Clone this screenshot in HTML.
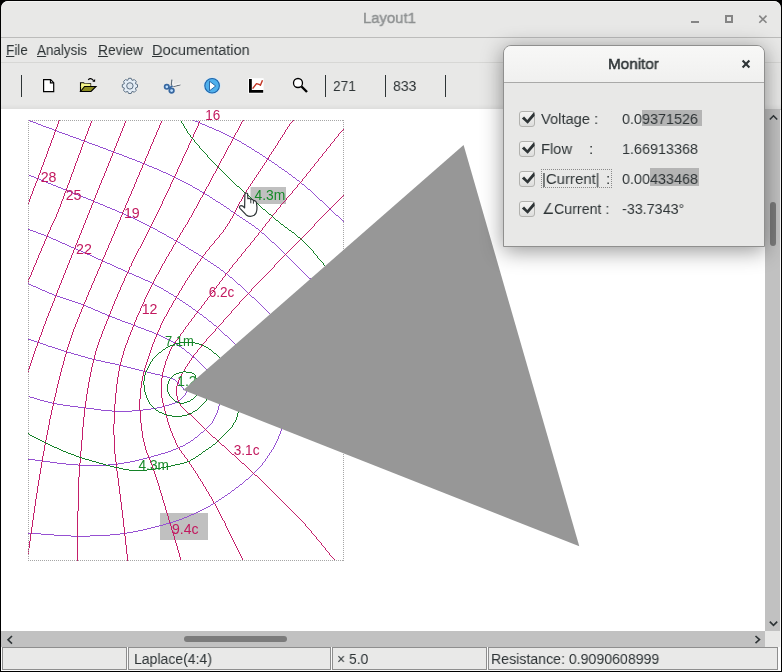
<!DOCTYPE html>
<html><head><meta charset="utf-8">
<style>
html,body{margin:0;padding:0;}
body{width:782px;height:672px;position:relative;overflow:hidden;background:#000;font-family:"Liberation Sans",sans-serif;color:#2e3436;font-size:15.4px;}
.abs{position:absolute;}
#win{position:absolute;left:1px;top:1px;width:780px;height:670px;background:#e8e8e7;border-radius:7px 7px 0 0;overflow:hidden;}
.t{position:absolute;white-space:nowrap;line-height:16px;transform-origin:0 50%;will-change:transform;}
svg{will-change:transform;}
.t u{text-decoration:underline;text-underline-offset:1px;text-decoration-thickness:1px;}
#title{left:362.3px;top:9.1px;color:#8e9192;-webkit-text-stroke:0.5px #8e9192;transform:scaleX(0.966);}
.sep{position:absolute;width:1px;background:#2e3436;top:74px;height:22px;}
#canvas{position:absolute;left:0;top:108px;width:764px;height:522px;background:#fff;}
.panel{position:absolute;top:646px;height:23px;background:#e9e9e8;border:1px solid #8e8e8e;box-sizing:border-box;}
.cb{position:absolute;left:518px;width:16px;height:16px;box-sizing:border-box;border:1px solid #b2b2af;border-radius:3px;background:linear-gradient(#f4f4f3,#dededd);}
</style></head><body>
<div id="win">
  <!-- title bar -->
  <div class="abs" style="left:0;top:0;width:780px;height:36px;background:#e8e8e7;box-shadow:inset 0 1px #f3f3f2;border-radius:7px 7px 0 0;"></div>
  <div class="abs" style="left:0;top:36px;width:780px;height:1px;background:#bcbcbb;"></div>
  <div class="t" id="title">Layout1</div>
  <!-- menu -->
  <div class="t" style="left:4.7px;top:40.5px;transform:scaleX(0.881);"><u>F</u>ile</div>
  <div class="t" style="left:36.4px;top:40.5px;transform:scaleX(0.873);"><u>A</u>nalysis</div>
  <div class="t" style="left:97.4px;top:40.5px;transform:scaleX(0.891);"><u>R</u>eview</div>
  <div class="t" style="left:151.3px;top:40.5px;transform:scaleX(0.943);"><u>D</u>ocumentation</div>
  <div class="abs" style="left:0;top:61px;width:780px;height:1px;background:#d7d7d5;"></div>
  <!-- toolbar -->
  <div class="sep" style="left:20px;"></div>
  <div class="sep" style="left:324px;"></div>
  <div class="sep" style="left:384px;"></div>
  <div class="sep" style="left:444px;"></div>
  <div class="t" style="left:331.5px;top:76.5px;transform:scaleX(0.895);">271</div>
  <div class="t" style="left:391.5px;top:76.5px;transform:scaleX(0.914);">833</div>
  <div class="abs" style="left:0;top:103px;width:780px;height:5px;background:linear-gradient(#e8e8e7,#dededd);"></div>
  <!-- canvas -->
  <div id="canvas"></div>
  <!-- scrollbars -->
  <div class="abs" style="left:764px;top:108px;width:16px;height:522px;background:#c1c1c1;"></div>
  <div class="abs" style="left:0;top:630px;width:764px;height:16px;background:#c1c1c1;"></div>
  <div class="abs" style="left:764px;top:630px;width:16px;height:16px;background:#e8e8e7;"></div>
  <div class="abs" style="left:183px;top:635px;width:103px;height:6px;border-radius:3px;background:#7b7b7b;"></div>
  <div class="abs" style="left:769px;top:201px;width:6px;height:44px;border-radius:3px;background:#7b7b7b;"></div>
  <div class="abs" style="left:779px;top:109px;width:1px;height:537px;background:#f6f6f6;"></div>
  <!-- status bar -->
  <div class="abs" style="left:0;top:646px;width:780px;height:24px;background:#fbfbfb;"></div>
  <div class="panel" style="left:1px;width:125px;"></div>
  <div class="panel" style="left:127px;width:203px;"></div>
  <div class="panel" style="left:331px;width:155px;"></div>
  <div class="panel" style="left:487px;width:290px;"></div>
  <div class="t" style="left:133.2px;top:649.5px;transform:scaleX(0.911);">Laplace(4:4)</div>
  <div class="t" style="left:335.6px;top:649.5px;transform:scaleX(0.905);">× 5.0</div>
  <div class="t" style="left:489.7px;top:649.5px;transform:scaleX(0.919);">Resistance: 0.9090608999</div>
</div>
<svg class="abs" style="left:0;top:0;" width="782" height="672" viewBox="0 0 782 672">
<defs><clipPath id="rc"><rect x="28" y="120" width="316" height="441"/></clipPath></defs>
<rect x="160" y="513" width="48" height="27" fill="#c0c0c0"/>
<rect x="250.5" y="187" width="35.5" height="17" fill="#c0c0c0"/>

<g shape-rendering="crispEdges">
<path d="M28 120h2v1h-2zM193 120h2v1h-2zM30 121h3v1h-3zM195 121h3v1h-3zM33 122h3v1h-3zM198 122h2v1h-2zM36 123h2v1h-2zM200 123h2v1h-2zM38 124h3v1h-3zM202 124h3v1h-3zM41 125h2v1h-2zM205 125h2v1h-2zM43 126h3v1h-3zM207 126h2v1h-2zM46 127h3v1h-3zM209 127h3v1h-3zM49 128h3v1h-3zM212 128h2v1h-2zM52 129h2v1h-2zM214 129h2v1h-2zM54 130h3v1h-3zM216 130h3v1h-3zM57 131h2v1h-2zM219 131h2v1h-2zM59 132h3v1h-3zM221 132h2v1h-2zM62 133h3v1h-3zM223 133h2v1h-2zM65 134h3v1h-3zM225 134h2v1h-2zM68 135h2v1h-2zM227 135h2v1h-2zM70 136h3v1h-3zM229 136h2v1h-2zM73 137h3v1h-3zM231 137h2v1h-2zM76 138h3v1h-3zM233 138h2v1h-2zM79 139h2v1h-2zM235 139h2v1h-2zM81 140h3v1h-3zM237 140h2v1h-2zM84 141h3v1h-3zM239 141h2v1h-2zM87 142h2v1h-2zM241 142h1v1h-1zM89 143h3v1h-3zM242 143h2v1h-2zM92 144h3v1h-3zM244 144h2v1h-2zM95 145h3v1h-3zM246 145h1v1h-1zM98 146h2v1h-2zM247 146h2v1h-2zM100 147h3v1h-3zM249 147h2v1h-2zM103 148h3v1h-3zM251 148h1v1h-1zM106 149h2v1h-2zM252 149h2v1h-2zM108 150h3v1h-3zM254 150h1v1h-1zM111 151h3v1h-3zM255 151h2v1h-2zM114 152h2v1h-2zM257 152h2v1h-2zM116 153h3v1h-3zM259 153h1v1h-1zM119 154h3v1h-3zM260 154h2v1h-2zM122 155h2v1h-2zM262 155h1v1h-1zM124 156h3v1h-3zM263 156h2v1h-2zM127 157h2v1h-2zM265 157h1v1h-1zM129 158h3v1h-3zM266 158h2v1h-2zM132 159h3v1h-3zM268 159h1v1h-1zM135 160h2v1h-2zM269 160h2v1h-2zM137 161h3v1h-3zM271 161h1v1h-1zM140 162h2v1h-2zM272 162h2v1h-2zM142 163h3v1h-3zM274 163h1v1h-1zM145 164h2v1h-2zM275 164h2v1h-2zM147 165h2v1h-2zM277 165h1v1h-1zM149 166h3v1h-3zM278 166h1v1h-1zM152 167h2v1h-2zM279 167h2v1h-2zM154 168h3v1h-3zM281 168h1v1h-1zM157 169h2v1h-2zM282 169h2v1h-2zM159 170h2v1h-2zM284 170h1v1h-1zM161 171h2v1h-2zM285 171h2v1h-2zM163 172h3v1h-3zM287 172h1v1h-1zM166 173h2v1h-2zM288 173h1v1h-1zM28 174h1v1h-1zM168 174h2v1h-2zM289 174h2v1h-2zM29 175h2v1h-2zM170 175h2v1h-2zM291 175h1v1h-1zM31 176h3v1h-3zM172 176h2v1h-2zM292 176h1v1h-1zM34 177h2v1h-2zM174 177h2v1h-2zM293 177h2v1h-2zM36 178h3v1h-3zM176 178h2v1h-2zM295 178h1v1h-1zM39 179h2v1h-2zM178 179h2v1h-2zM296 179h1v1h-1zM41 180h3v1h-3zM180 180h2v1h-2zM297 180h2v1h-2zM44 181h2v1h-2zM182 181h2v1h-2zM299 181h1v1h-1zM46 182h2v1h-2zM184 182h2v1h-2zM300 182h1v1h-1zM48 183h3v1h-3zM186 183h2v1h-2zM301 183h1v1h-1zM51 184h2v1h-2zM188 184h2v1h-2zM302 184h2v1h-2zM53 185h3v1h-3zM190 185h2v1h-2zM304 185h1v1h-1zM56 186h2v1h-2zM192 186h1v1h-1zM305 186h1v1h-1zM58 187h3v1h-3zM193 187h2v1h-2zM306 187h1v1h-1zM61 188h2v1h-2zM195 188h2v1h-2zM307 188h1v1h-1zM63 189h3v1h-3zM197 189h2v1h-2zM308 189h2v1h-2zM66 190h2v1h-2zM199 190h1v1h-1zM310 190h1v1h-1zM68 191h3v1h-3zM200 191h2v1h-2zM311 191h1v1h-1zM71 192h2v1h-2zM202 192h2v1h-2zM312 192h1v1h-1zM73 193h3v1h-3zM204 193h1v1h-1zM313 193h1v1h-1zM76 194h2v1h-2zM205 194h2v1h-2zM314 194h1v1h-1zM78 195h3v1h-3zM207 195h2v1h-2zM315 195h1v1h-1zM81 196h2v1h-2zM209 196h1v1h-1zM316 196h1v1h-1zM83 197h3v1h-3zM210 197h2v1h-2zM317 197h1v1h-1zM86 198h2v1h-2zM212 198h1v1h-1zM318 198h1v1h-1zM88 199h3v1h-3zM213 199h2v1h-2zM319 199h1v1h-1zM91 200h2v1h-2zM215 200h1v1h-1zM320 200h2v1h-2zM93 201h2v1h-2zM216 201h2v1h-2zM322 201h1v1h-1zM95 202h3v1h-3zM218 202h2v1h-2zM323 202h1v1h-1zM98 203h2v1h-2zM220 203h1v1h-1zM324 203h1v1h-1zM100 204h3v1h-3zM221 204h2v1h-2zM325 204h1v1h-1zM103 205h2v1h-2zM223 205h1v1h-1zM326 205h1v1h-1zM105 206h2v1h-2zM224 206h2v1h-2zM327 206h1v1h-1zM107 207h3v1h-3zM226 207h1v1h-1zM328 207h1v1h-1zM110 208h2v1h-2zM227 208h2v1h-2zM329 208h1v1h-1zM112 209h3v1h-3zM229 209h1v1h-1zM330 209h1v1h-1zM115 210h2v1h-2zM230 210h1v1h-1zM331 210h1v1h-1zM117 211h2v1h-2zM231 211h2v1h-2zM332 211h1v1h-1zM119 212h3v1h-3zM233 212h1v1h-1zM333 212h1v1h-1zM122 213h2v1h-2zM234 213h2v1h-2zM334 213h1v1h-1zM124 214h2v1h-2zM236 214h1v1h-1zM335 214h1v1h-1zM126 215h2v1h-2zM237 215h2v1h-2zM336 215h2v1h-2zM128 216h3v1h-3zM239 216h1v1h-1zM338 216h1v1h-1zM131 217h2v1h-2zM240 217h2v1h-2zM339 217h1v1h-1zM133 218h2v1h-2zM242 218h1v1h-1zM340 218h1v1h-1zM135 219h2v1h-2zM243 219h2v1h-2zM341 219h1v1h-1zM137 220h2v1h-2zM245 220h1v1h-1zM342 220h1v1h-1zM139 221h2v1h-2zM246 221h2v1h-2zM343 221h1v1h-1zM141 222h2v1h-2zM248 222h1v1h-1zM143 223h2v1h-2zM249 223h2v1h-2zM145 224h2v1h-2zM251 224h1v1h-1zM147 225h2v1h-2zM252 225h2v1h-2zM149 226h2v1h-2zM254 226h1v1h-1zM151 227h2v1h-2zM255 227h1v1h-1zM153 228h2v1h-2zM256 228h2v1h-2zM28 229h2v1h-2zM155 229h2v1h-2zM258 229h1v1h-1zM30 230h3v1h-3zM157 230h1v1h-1zM259 230h1v1h-1zM33 231h3v1h-3zM158 231h2v1h-2zM260 231h1v1h-1zM36 232h2v1h-2zM160 232h2v1h-2zM261 232h1v1h-1zM38 233h3v1h-3zM162 233h2v1h-2zM262 233h2v1h-2zM41 234h3v1h-3zM164 234h2v1h-2zM264 234h1v1h-1zM44 235h2v1h-2zM166 235h1v1h-1zM265 235h1v1h-1zM46 236h3v1h-3zM167 236h2v1h-2zM266 236h1v1h-1zM49 237h2v1h-2zM169 237h2v1h-2zM267 237h1v1h-1zM51 238h2v1h-2zM171 238h2v1h-2zM268 238h1v1h-1zM53 239h3v1h-3zM173 239h1v1h-1zM269 239h1v1h-1zM56 240h2v1h-2zM174 240h2v1h-2zM270 240h1v1h-1zM58 241h2v1h-2zM176 241h2v1h-2zM271 241h1v1h-1zM60 242h2v1h-2zM178 242h2v1h-2zM272 242h2v1h-2zM62 243h3v1h-3zM180 243h1v1h-1zM274 243h1v1h-1zM65 244h2v1h-2zM181 244h2v1h-2zM275 244h1v1h-1zM67 245h2v1h-2zM183 245h2v1h-2zM276 245h1v1h-1zM69 246h2v1h-2zM185 246h1v1h-1zM277 246h1v1h-1zM71 247h3v1h-3zM186 247h2v1h-2zM278 247h1v1h-1zM74 248h2v1h-2zM188 248h1v1h-1zM279 248h1v1h-1zM76 249h2v1h-2zM189 249h2v1h-2zM280 249h1v1h-1zM78 250h3v1h-3zM191 250h2v1h-2zM281 250h1v1h-1zM81 251h2v1h-2zM193 251h1v1h-1zM282 251h1v1h-1zM83 252h2v1h-2zM194 252h2v1h-2zM283 252h1v1h-1zM85 253h2v1h-2zM196 253h2v1h-2zM284 253h1v1h-1zM87 254h3v1h-3zM198 254h1v1h-1zM285 254h1v1h-1zM90 255h2v1h-2zM199 255h2v1h-2zM286 255h1v1h-1zM92 256h2v1h-2zM201 256h1v1h-1zM287 256h1v1h-1zM94 257h2v1h-2zM202 257h2v1h-2zM288 257h1v1h-1zM96 258h2v1h-2zM204 258h1v1h-1zM289 258h1v1h-1zM98 259h3v1h-3zM205 259h2v1h-2zM290 259h1v1h-1zM101 260h2v1h-2zM207 260h1v1h-1zM291 260h1v1h-1zM103 261h2v1h-2zM208 261h2v1h-2zM292 261h1v1h-1zM105 262h2v1h-2zM210 262h1v1h-1zM293 262h1v1h-1zM107 263h3v1h-3zM211 263h2v1h-2zM294 263h1v1h-1zM110 264h2v1h-2zM213 264h1v1h-1zM295 264h1v1h-1zM112 265h2v1h-2zM214 265h2v1h-2zM296 265h1v1h-1zM114 266h2v1h-2zM216 266h1v1h-1zM297 266h1v1h-1zM116 267h2v1h-2zM217 267h2v1h-2zM298 267h1v1h-1zM118 268h3v1h-3zM219 268h1v1h-1zM299 268h1v1h-1zM121 269h2v1h-2zM220 269h1v1h-1zM300 269h1v1h-1zM123 270h2v1h-2zM221 270h2v1h-2zM301 270h1v1h-1zM125 271h2v1h-2zM223 271h1v1h-1zM302 271h1v1h-1zM127 272h2v1h-2zM224 272h1v1h-1zM303 272h1v1h-1zM129 273h3v1h-3zM225 273h2v1h-2zM304 273h1v1h-1zM132 274h2v1h-2zM227 274h1v1h-1zM305 274h1v1h-1zM134 275h2v1h-2zM228 275h1v1h-1zM306 275h1v1h-1zM136 276h3v1h-3zM229 276h1v1h-1zM307 276h1v1h-1zM139 277h2v1h-2zM230 277h2v1h-2zM308 277h1v1h-1zM141 278h2v1h-2zM232 278h1v1h-1zM309 278h2v1h-2zM143 279h2v1h-2zM233 279h1v1h-1zM145 280h3v1h-3zM234 280h1v1h-1zM148 281h2v1h-2zM235 281h1v1h-1zM150 282h2v1h-2zM236 282h1v1h-1zM28 283h1v1h-1zM152 283h2v1h-2zM237 283h1v1h-1zM29 284h2v1h-2zM154 284h1v1h-1zM238 284h2v1h-2zM31 285h2v1h-2zM155 285h2v1h-2zM240 285h1v1h-1zM33 286h3v1h-3zM157 286h2v1h-2zM241 286h1v1h-1zM36 287h2v1h-2zM159 287h2v1h-2zM242 287h1v1h-1zM38 288h2v1h-2zM161 288h2v1h-2zM243 288h1v1h-1zM40 289h2v1h-2zM163 289h1v1h-1zM244 289h1v1h-1zM42 290h3v1h-3zM164 290h2v1h-2zM245 290h1v1h-1zM45 291h2v1h-2zM166 291h2v1h-2zM246 291h1v1h-1zM47 292h2v1h-2zM168 292h1v1h-1zM247 292h1v1h-1zM49 293h3v1h-3zM169 293h2v1h-2zM248 293h1v1h-1zM52 294h2v1h-2zM171 294h2v1h-2zM249 294h1v1h-1zM54 295h3v1h-3zM173 295h1v1h-1zM250 295h1v1h-1zM57 296h3v1h-3zM174 296h2v1h-2zM251 296h1v1h-1zM60 297h3v1h-3zM176 297h1v1h-1zM252 297h2v1h-2zM63 298h3v1h-3zM177 298h2v1h-2zM254 298h1v1h-1zM66 299h3v1h-3zM179 299h1v1h-1zM255 299h1v1h-1zM69 300h3v1h-3zM180 300h2v1h-2zM256 300h1v1h-1zM72 301h3v1h-3zM182 301h1v1h-1zM257 301h1v1h-1zM75 302h3v1h-3zM183 302h2v1h-2zM258 302h1v1h-1zM78 303h3v1h-3zM185 303h1v1h-1zM259 303h1v1h-1zM81 304h2v1h-2zM186 304h2v1h-2zM260 304h1v1h-1zM83 305h3v1h-3zM188 305h1v1h-1zM261 305h1v1h-1zM86 306h2v1h-2zM189 306h2v1h-2zM262 306h1v1h-1zM88 307h3v1h-3zM191 307h1v1h-1zM263 307h1v1h-1zM91 308h2v1h-2zM192 308h1v1h-1zM264 308h1v1h-1zM93 309h2v1h-2zM193 309h2v1h-2zM265 309h1v1h-1zM95 310h3v1h-3zM195 310h1v1h-1zM266 310h1v1h-1zM98 311h2v1h-2zM196 311h2v1h-2zM267 311h1v1h-1zM100 312h2v1h-2zM198 312h1v1h-1zM268 312h1v1h-1zM102 313h3v1h-3zM199 313h1v1h-1zM269 313h1v1h-1zM105 314h2v1h-2zM200 314h2v1h-2zM270 314h1v1h-1zM107 315h2v1h-2zM202 315h1v1h-1zM109 316h3v1h-3zM203 316h1v1h-1zM112 317h3v1h-3zM204 317h2v1h-2zM115 318h2v1h-2zM206 318h1v1h-1zM117 319h3v1h-3zM207 319h1v1h-1zM120 320h2v1h-2zM208 320h1v1h-1zM122 321h3v1h-3zM209 321h2v1h-2zM125 322h3v1h-3zM211 322h1v1h-1zM128 323h3v1h-3zM212 323h1v1h-1zM131 324h2v1h-2zM213 324h1v1h-1zM133 325h3v1h-3zM214 325h2v1h-2zM136 326h2v1h-2zM216 326h1v1h-1zM138 327h3v1h-3zM217 327h1v1h-1zM141 328h3v1h-3zM218 328h1v1h-1zM144 329h2v1h-2zM219 329h1v1h-1zM146 330h3v1h-3zM220 330h1v1h-1zM149 331h3v1h-3zM221 331h1v1h-1zM152 332h2v1h-2zM222 332h1v1h-1zM154 333h2v1h-2zM223 333h1v1h-1zM156 334h3v1h-3zM224 334h1v1h-1zM159 335h2v1h-2zM225 335h2v1h-2zM161 336h2v1h-2zM227 336h1v1h-1zM163 337h2v1h-2zM228 337h1v1h-1zM165 338h2v1h-2zM229 338h1v1h-1zM28 339h3v1h-3zM167 339h2v1h-2zM230 339h1v1h-1zM31 340h3v1h-3zM169 340h2v1h-2zM231 340h1v1h-1zM34 341h3v1h-3zM171 341h2v1h-2zM232 341h1v1h-1zM37 342h3v1h-3zM173 342h2v1h-2zM233 342h1v1h-1zM40 343h3v1h-3zM175 343h1v1h-1zM234 343h1v1h-1zM43 344h3v1h-3zM176 344h2v1h-2zM235 344h1v1h-1zM46 345h2v1h-2zM178 345h1v1h-1zM48 346h4v1h-4zM179 346h2v1h-2zM52 347h3v1h-3zM181 347h1v1h-1zM55 348h3v1h-3zM182 348h2v1h-2zM58 349h3v1h-3zM184 349h1v1h-1zM61 350h3v1h-3zM185 350h1v1h-1zM64 351h3v1h-3zM186 351h1v1h-1zM67 352h4v1h-4zM187 352h2v1h-2zM71 353h3v1h-3zM189 353h1v1h-1zM74 354h4v1h-4zM190 354h1v1h-1zM78 355h3v1h-3zM191 355h1v1h-1zM81 356h4v1h-4zM192 356h1v1h-1zM85 357h3v1h-3zM193 357h2v1h-2zM88 358h4v1h-4zM195 358h1v1h-1zM92 359h4v1h-4zM196 359h1v1h-1zM96 360h5v1h-5zM197 360h1v1h-1zM101 361h4v1h-4zM198 361h1v1h-1zM105 362h5v1h-5zM199 362h1v1h-1zM110 363h5v1h-5zM200 363h1v1h-1zM115 364h4v1h-4zM201 364h1v1h-1zM119 365h4v1h-4zM202 365h1v1h-1zM123 366h4v1h-4zM203 366h1v1h-1zM127 367h4v1h-4zM204 367h1v1h-1zM131 368h4v1h-4zM205 368h1v1h-1zM135 369h4v1h-4zM206 369h2v1h-2zM139 370h4v1h-4zM143 371h4v1h-4zM147 372h4v1h-4zM151 373h4v1h-4zM155 374h5v1h-5zM160 375h3v1h-3zM163 376h4v1h-4zM167 377h3v1h-3zM170 378h3v1h-3zM173 379h2v1h-2zM175 380h1v1h-1zM176 381h1v1h-1zM177 382h1v1h-1zM178 383h1v1h-1zM179 384h1v1h-1zM180 385h1v1h-1zM181 386h1v1h-1zM182 387h1v1h-1zM183 388h1v2h-1zM186 391h1v2h-1zM185 393h1v2h-1zM184 395h1v1h-1zM28 396h2v1h-2zM183 396h1v1h-1zM30 397h4v1h-4zM182 397h1v1h-1zM34 398h3v1h-3zM181 398h1v1h-1zM37 399h3v1h-3zM180 399h1v1h-1zM40 400h4v1h-4zM179 400h1v1h-1zM44 401h4v1h-4zM177 401h2v1h-2zM48 402h4v1h-4zM175 402h2v1h-2zM52 403h5v1h-5zM172 403h3v1h-3zM57 404h6v1h-6zM169 404h3v1h-3zM219 404h1v2h-1zM63 405h7v1h-7zM165 405h4v1h-4zM70 406h8v1h-8zM162 406h3v1h-3zM218 406h1v4h-1zM78 407h8v1h-8zM157 407h5v1h-5zM86 408h8v1h-8zM151 408h6v1h-6zM94 409h7v1h-7zM143 409h8v1h-8zM101 410h11v1h-11zM132 410h11v1h-11zM217 410h1v3h-1zM112 411h20v1h-20zM216 413h1v2h-1zM215 415h1v2h-1zM214 417h1v2h-1zM213 419h1v2h-1zM212 421h1v2h-1zM211 423h1v1h-1zM210 424h1v1h-1zM209 425h1v1h-1zM208 426h1v1h-1zM207 427h1v1h-1zM206 428h1v1h-1zM281 428h1v3h-1zM205 429h1v1h-1zM204 430h1v1h-1zM203 431h1v1h-1zM280 431h1v3h-1zM201 432h2v1h-2zM200 433h1v1h-1zM199 434h1v1h-1zM279 434h1v2h-1zM198 435h1v1h-1zM197 436h1v1h-1zM278 436h1v3h-1zM195 437h2v1h-2zM194 438h1v1h-1zM193 439h1v1h-1zM277 439h1v2h-1zM191 440h2v1h-2zM190 441h1v1h-1zM276 441h1v2h-1zM188 442h2v1h-2zM186 443h2v1h-2zM275 443h1v2h-1zM185 444h1v1h-1zM183 445h2v1h-2zM274 445h1v2h-1zM180 446h3v1h-3zM178 447h2v1h-2zM273 447h1v2h-1zM176 448h2v1h-2zM173 449h3v1h-3zM272 449h1v1h-1zM171 450h2v1h-2zM271 450h1v2h-1zM168 451h3v1h-3zM165 452h3v1h-3zM270 452h1v1h-1zM161 453h4v1h-4zM269 453h1v2h-1zM158 454h3v1h-3zM154 455h4v1h-4zM268 455h1v1h-1zM151 456h3v1h-3zM267 456h1v2h-1zM147 457h4v1h-4zM143 458h4v1h-4zM266 458h1v1h-1zM28 459h7v1h-7zM139 459h4v1h-4zM265 459h1v2h-1zM35 460h7v1h-7zM135 460h4v1h-4zM42 461h8v1h-8zM130 461h5v1h-5zM264 461h1v1h-1zM50 462h7v1h-7zM124 462h6v1h-6zM263 462h1v1h-1zM57 463h9v1h-9zM118 463h6v1h-6zM262 463h1v2h-1zM66 464h12v1h-12zM108 464h10v1h-10zM78 465h30v1h-30zM261 465h1v1h-1zM260 466h1v1h-1zM259 467h1v1h-1zM258 468h1v1h-1zM257 469h1v1h-1zM256 470h1v1h-1zM255 471h1v1h-1zM254 472h1v1h-1zM253 473h1v1h-1zM252 474h1v1h-1zM251 475h1v1h-1zM250 476h1v1h-1zM249 477h1v1h-1zM248 478h1v1h-1zM246 479h2v1h-2zM245 480h1v1h-1zM244 481h1v1h-1zM243 482h1v1h-1zM242 483h1v1h-1zM240 484h2v1h-2zM239 485h1v1h-1zM238 486h1v1h-1zM236 487h2v1h-2zM235 488h1v1h-1zM234 489h1v1h-1zM232 490h2v1h-2zM231 491h1v1h-1zM230 492h1v1h-1zM228 493h2v1h-2zM227 494h1v1h-1zM225 495h2v1h-2zM224 496h1v1h-1zM222 497h2v1h-2zM221 498h1v1h-1zM219 499h2v1h-2zM218 500h1v1h-1zM216 501h2v1h-2zM215 502h1v1h-1zM213 503h2v1h-2zM211 504h2v1h-2zM210 505h1v1h-1zM208 506h2v1h-2zM206 507h2v1h-2zM204 508h2v1h-2zM202 509h2v1h-2zM200 510h2v1h-2zM198 511h2v1h-2zM196 512h2v1h-2zM194 513h2v1h-2zM191 514h3v1h-3zM189 515h2v1h-2zM187 516h2v1h-2zM184 517h3v1h-3zM182 518h2v1h-2zM179 519h3v1h-3zM176 520h3v1h-3zM173 521h3v1h-3zM170 522h3v1h-3zM166 523h4v1h-4zM163 524h3v1h-3zM159 525h4v1h-4zM155 526h4v1h-4zM151 527h4v1h-4zM147 528h4v1h-4zM143 529h4v1h-4zM138 530h5v1h-5zM133 531h5v1h-5zM127 532h6v1h-6zM28 533h13v1h-13zM120 533h7v1h-7zM41 534h13v1h-13zM110 534h10v1h-10zM54 535h17v1h-17zM90 535h20v1h-20zM71 536h19v1h-19z" fill="#9650d2"/>
<path d="M59 120h1v1h-1zM92 120h1v1h-1zM126 120h1v1h-1zM162 120h1v1h-1zM200 120h1v1h-1zM243 120h1v1h-1zM293 120h1v1h-1zM58 121h1v3h-1zM91 121h1v2h-1zM125 121h1v2h-1zM161 121h1v2h-1zM199 121h1v2h-1zM242 121h1v1h-1zM292 121h1v1h-1zM241 122h1v2h-1zM291 122h1v1h-1zM90 123h1v3h-1zM124 123h1v3h-1zM160 123h1v2h-1zM198 123h1v3h-1zM290 123h1v1h-1zM57 124h1v3h-1zM240 124h1v2h-1zM289 124h1v2h-1zM159 125h1v3h-1zM89 126h1v2h-1zM123 126h1v2h-1zM197 126h1v2h-1zM239 126h1v2h-1zM288 126h1v1h-1zM56 127h1v2h-1zM287 127h1v2h-1zM88 128h1v3h-1zM122 128h1v3h-1zM158 128h1v2h-1zM196 128h1v2h-1zM238 128h1v2h-1zM55 129h1v3h-1zM286 129h1v1h-1zM343 129h1v1h-1zM157 130h1v2h-1zM195 130h1v2h-1zM237 130h1v2h-1zM285 130h1v2h-1zM342 130h1v1h-1zM87 131h1v3h-1zM121 131h1v2h-1zM341 131h1v1h-1zM54 132h1v3h-1zM156 132h1v3h-1zM194 132h1v2h-1zM236 132h1v1h-1zM284 132h1v2h-1zM340 132h1v1h-1zM120 133h1v3h-1zM235 133h1v2h-1zM339 133h1v1h-1zM86 134h1v2h-1zM193 134h1v3h-1zM283 134h1v1h-1zM338 134h1v2h-1zM53 135h1v3h-1zM155 135h1v2h-1zM234 135h1v2h-1zM282 135h1v2h-1zM85 136h1v3h-1zM119 136h1v2h-1zM337 136h1v1h-1zM154 137h1v2h-1zM192 137h1v2h-1zM233 137h1v2h-1zM281 137h1v1h-1zM336 137h1v1h-1zM52 138h1v2h-1zM118 138h1v3h-1zM280 138h1v2h-1zM335 138h1v1h-1zM84 139h1v3h-1zM153 139h1v3h-1zM191 139h1v2h-1zM232 139h1v2h-1zM334 139h1v2h-1zM51 140h1v3h-1zM279 140h1v1h-1zM117 141h1v2h-1zM190 141h1v2h-1zM231 141h1v2h-1zM278 141h1v2h-1zM333 141h1v1h-1zM83 142h1v2h-1zM152 142h1v2h-1zM332 142h1v1h-1zM50 143h1v3h-1zM116 143h1v3h-1zM189 143h1v2h-1zM230 143h1v2h-1zM277 143h1v2h-1zM331 143h1v1h-1zM82 144h1v3h-1zM151 144h1v2h-1zM330 144h1v2h-1zM188 145h1v3h-1zM229 145h1v1h-1zM276 145h1v1h-1zM49 146h1v2h-1zM115 146h1v2h-1zM150 146h1v3h-1zM228 146h1v2h-1zM275 146h1v2h-1zM329 146h1v1h-1zM81 147h1v3h-1zM328 147h1v1h-1zM48 148h1v3h-1zM114 148h1v3h-1zM187 148h1v2h-1zM227 148h1v2h-1zM274 148h1v1h-1zM327 148h1v1h-1zM149 149h1v2h-1zM273 149h1v2h-1zM326 149h1v2h-1zM80 150h1v3h-1zM186 150h1v2h-1zM226 150h1v2h-1zM47 151h1v3h-1zM113 151h1v2h-1zM148 151h1v3h-1zM272 151h1v1h-1zM325 151h1v1h-1zM185 152h1v2h-1zM225 152h1v2h-1zM271 152h1v2h-1zM324 152h1v1h-1zM79 153h1v2h-1zM112 153h1v3h-1zM323 153h1v1h-1zM46 154h1v3h-1zM147 154h1v2h-1zM184 154h1v2h-1zM224 154h1v2h-1zM270 154h1v1h-1zM322 154h1v2h-1zM78 155h1v3h-1zM269 155h1v2h-1zM111 156h1v2h-1zM146 156h1v2h-1zM183 156h1v2h-1zM223 156h1v2h-1zM321 156h1v1h-1zM45 157h1v2h-1zM268 157h1v2h-1zM320 157h1v1h-1zM77 158h1v3h-1zM110 158h1v3h-1zM145 158h1v3h-1zM182 158h1v3h-1zM222 158h1v1h-1zM319 158h1v1h-1zM44 159h1v3h-1zM221 159h1v2h-1zM267 159h1v1h-1zM318 159h1v2h-1zM266 160h1v2h-1zM76 161h1v2h-1zM109 161h1v2h-1zM144 161h1v2h-1zM181 161h1v2h-1zM220 161h1v2h-1zM317 161h1v1h-1zM43 162h1v3h-1zM265 162h1v1h-1zM316 162h1v1h-1zM75 163h1v3h-1zM108 163h1v3h-1zM143 163h1v2h-1zM180 163h1v2h-1zM219 163h1v2h-1zM264 163h1v2h-1zM315 163h1v1h-1zM314 164h1v2h-1zM42 165h1v2h-1zM142 165h1v3h-1zM179 165h1v2h-1zM218 165h1v2h-1zM263 165h1v1h-1zM74 166h1v3h-1zM107 166h1v2h-1zM262 166h1v2h-1zM313 166h1v1h-1zM41 167h1v3h-1zM178 167h1v2h-1zM217 167h1v2h-1zM312 167h1v1h-1zM106 168h1v3h-1zM141 168h1v2h-1zM261 168h1v1h-1zM311 168h1v1h-1zM73 169h1v3h-1zM177 169h1v3h-1zM216 169h1v2h-1zM260 169h1v2h-1zM310 169h1v2h-1zM40 170h1v3h-1zM140 170h1v2h-1zM105 171h1v2h-1zM215 171h1v2h-1zM259 171h1v1h-1zM309 171h1v1h-1zM72 172h1v2h-1zM139 172h1v3h-1zM176 172h1v2h-1zM258 172h1v2h-1zM308 172h1v1h-1zM39 173h1v2h-1zM104 173h1v3h-1zM214 173h1v1h-1zM307 173h1v1h-1zM71 174h1v3h-1zM175 174h1v2h-1zM213 174h1v2h-1zM257 174h1v1h-1zM306 174h1v2h-1zM38 175h1v3h-1zM138 175h1v2h-1zM256 175h1v2h-1zM103 176h1v2h-1zM174 176h1v2h-1zM212 176h1v2h-1zM305 176h1v1h-1zM70 177h1v3h-1zM137 177h1v2h-1zM255 177h1v1h-1zM304 177h1v1h-1zM37 178h1v3h-1zM102 178h1v2h-1zM173 178h1v2h-1zM211 178h1v2h-1zM254 178h1v2h-1zM303 178h1v1h-1zM136 179h1v3h-1zM302 179h1v2h-1zM69 180h1v3h-1zM101 180h1v3h-1zM172 180h1v2h-1zM210 180h1v2h-1zM253 180h1v1h-1zM36 181h1v2h-1zM252 181h1v2h-1zM301 181h1v1h-1zM135 182h1v2h-1zM171 182h1v2h-1zM209 182h1v2h-1zM300 182h1v1h-1zM35 183h1v3h-1zM68 183h1v2h-1zM100 183h1v2h-1zM251 183h1v1h-1zM299 183h1v1h-1zM134 184h1v3h-1zM170 184h1v3h-1zM208 184h1v2h-1zM250 184h1v2h-1zM298 184h1v1h-1zM67 185h1v3h-1zM99 185h1v3h-1zM297 185h1v2h-1zM34 186h1v2h-1zM207 186h1v1h-1zM249 186h1v1h-1zM133 187h1v2h-1zM169 187h1v2h-1zM206 187h1v2h-1zM248 187h1v2h-1zM296 187h1v1h-1zM33 188h1v3h-1zM66 188h1v3h-1zM98 188h1v2h-1zM295 188h1v1h-1zM132 189h1v2h-1zM168 189h1v2h-1zM205 189h1v2h-1zM247 189h1v1h-1zM294 189h1v1h-1zM97 190h1v3h-1zM246 190h1v2h-1zM293 190h1v1h-1zM32 191h1v3h-1zM65 191h1v2h-1zM131 191h1v3h-1zM167 191h1v2h-1zM204 191h1v2h-1zM292 191h1v2h-1zM245 192h1v2h-1zM64 193h1v3h-1zM96 193h1v2h-1zM166 193h1v2h-1zM203 193h1v2h-1zM291 193h1v1h-1zM31 194h1v2h-1zM130 194h1v2h-1zM244 194h1v1h-1zM290 194h1v1h-1zM95 195h1v3h-1zM165 195h1v2h-1zM202 195h1v2h-1zM243 195h1v2h-1zM289 195h1v1h-1zM343 195h1v1h-1zM30 196h1v3h-1zM63 196h1v3h-1zM129 196h1v2h-1zM288 196h1v1h-1zM342 196h1v1h-1zM164 197h1v2h-1zM201 197h1v1h-1zM242 197h1v2h-1zM287 197h1v1h-1zM341 197h1v1h-1zM94 198h1v2h-1zM128 198h1v3h-1zM200 198h1v2h-1zM286 198h1v2h-1zM340 198h1v1h-1zM29 199h1v3h-1zM62 199h1v2h-1zM163 199h1v2h-1zM241 199h1v2h-1zM339 199h1v1h-1zM93 200h1v3h-1zM199 200h1v2h-1zM285 200h1v1h-1zM338 200h1v1h-1zM61 201h1v3h-1zM127 201h1v2h-1zM162 201h1v3h-1zM240 201h1v1h-1zM284 201h1v1h-1zM337 201h1v1h-1zM28 202h1v2h-1zM198 202h1v2h-1zM239 202h1v2h-1zM283 202h1v1h-1zM336 202h1v1h-1zM92 203h1v2h-1zM126 203h1v2h-1zM282 203h1v1h-1zM335 203h1v1h-1zM60 204h1v3h-1zM161 204h1v2h-1zM197 204h1v2h-1zM238 204h1v2h-1zM281 204h1v1h-1zM334 204h1v1h-1zM91 205h1v3h-1zM125 205h1v3h-1zM280 205h1v2h-1zM333 205h1v1h-1zM160 206h1v2h-1zM196 206h1v2h-1zM237 206h1v2h-1zM332 206h1v1h-1zM59 207h1v2h-1zM279 207h1v1h-1zM331 207h1v1h-1zM90 208h1v2h-1zM124 208h1v2h-1zM159 208h1v2h-1zM195 208h1v1h-1zM236 208h1v2h-1zM278 208h1v1h-1zM330 208h1v1h-1zM58 209h1v3h-1zM194 209h1v2h-1zM277 209h1v1h-1zM329 209h1v1h-1zM89 210h1v3h-1zM123 210h1v2h-1zM158 210h1v2h-1zM235 210h1v2h-1zM276 210h1v2h-1zM328 210h1v1h-1zM193 211h1v2h-1zM327 211h1v1h-1zM57 212h1v2h-1zM122 212h1v3h-1zM157 212h1v2h-1zM234 212h1v2h-1zM275 212h1v1h-1zM326 212h1v1h-1zM88 213h1v2h-1zM192 213h1v2h-1zM274 213h1v1h-1zM325 213h1v1h-1zM56 214h1v3h-1zM156 214h1v2h-1zM233 214h1v2h-1zM273 214h1v1h-1zM324 214h1v1h-1zM87 215h1v3h-1zM121 215h1v2h-1zM191 215h1v2h-1zM272 215h1v2h-1zM323 215h1v1h-1zM155 216h1v2h-1zM232 216h1v2h-1zM322 216h1v1h-1zM55 217h1v2h-1zM120 217h1v3h-1zM190 217h1v1h-1zM271 217h1v1h-1zM321 217h1v1h-1zM86 218h1v2h-1zM154 218h1v2h-1zM189 218h1v2h-1zM231 218h1v1h-1zM270 218h1v1h-1zM320 218h1v1h-1zM54 219h1v2h-1zM230 219h1v2h-1zM269 219h1v2h-1zM319 219h1v1h-1zM85 220h1v3h-1zM119 220h1v2h-1zM153 220h1v2h-1zM188 220h1v2h-1zM318 220h1v1h-1zM53 221h1v2h-1zM229 221h1v2h-1zM268 221h1v1h-1zM317 221h1v1h-1zM118 222h1v2h-1zM152 222h1v2h-1zM187 222h1v2h-1zM267 222h1v1h-1zM316 222h1v1h-1zM52 223h1v2h-1zM84 223h1v2h-1zM228 223h1v1h-1zM266 223h1v1h-1zM315 223h1v1h-1zM117 224h1v3h-1zM151 224h1v2h-1zM186 224h1v1h-1zM227 224h1v2h-1zM265 224h1v2h-1zM314 224h1v2h-1zM51 225h1v2h-1zM83 225h1v3h-1zM185 225h1v2h-1zM150 226h1v2h-1zM226 226h1v1h-1zM264 226h1v1h-1zM313 226h1v1h-1zM50 227h1v3h-1zM116 227h1v2h-1zM184 227h1v1h-1zM225 227h1v2h-1zM263 227h1v1h-1zM312 227h1v1h-1zM82 228h1v2h-1zM149 228h1v2h-1zM183 228h1v2h-1zM262 228h1v2h-1zM311 228h1v1h-1zM115 229h1v2h-1zM224 229h1v1h-1zM310 229h1v1h-1zM49 230h1v2h-1zM81 230h1v3h-1zM148 230h1v2h-1zM182 230h1v2h-1zM223 230h1v2h-1zM261 230h1v1h-1zM309 230h1v1h-1zM114 231h1v3h-1zM260 231h1v1h-1zM308 231h1v1h-1zM48 232h1v2h-1zM147 232h1v2h-1zM181 232h1v1h-1zM222 232h1v1h-1zM259 232h1v1h-1zM307 232h1v1h-1zM80 233h1v2h-1zM180 233h1v2h-1zM221 233h1v1h-1zM258 233h1v2h-1zM306 233h1v1h-1zM47 234h1v3h-1zM113 234h1v2h-1zM146 234h1v2h-1zM220 234h1v1h-1zM305 234h1v1h-1zM79 235h1v3h-1zM179 235h1v2h-1zM219 235h1v2h-1zM257 235h1v1h-1zM304 235h1v1h-1zM112 236h1v2h-1zM145 236h1v2h-1zM256 236h1v1h-1zM303 236h1v1h-1zM46 237h1v2h-1zM178 237h1v1h-1zM218 237h1v1h-1zM255 237h1v1h-1zM302 237h1v1h-1zM78 238h1v2h-1zM111 238h1v3h-1zM144 238h1v2h-1zM177 238h1v2h-1zM217 238h1v1h-1zM254 238h1v2h-1zM301 238h1v1h-1zM45 239h1v2h-1zM216 239h1v1h-1zM300 239h1v1h-1zM77 240h1v3h-1zM143 240h1v2h-1zM176 240h1v2h-1zM215 240h1v1h-1zM253 240h1v1h-1zM299 240h1v1h-1zM44 241h1v3h-1zM110 241h1v2h-1zM214 241h1v2h-1zM252 241h1v1h-1zM298 241h1v1h-1zM142 242h1v2h-1zM175 242h1v2h-1zM251 242h1v1h-1zM297 242h1v1h-1zM76 243h1v2h-1zM109 243h1v2h-1zM213 243h1v1h-1zM250 243h1v2h-1zM296 243h1v1h-1zM43 244h1v2h-1zM141 244h1v2h-1zM174 244h1v1h-1zM212 244h1v1h-1zM295 244h1v1h-1zM75 245h1v3h-1zM108 245h1v3h-1zM173 245h1v2h-1zM211 245h1v1h-1zM249 245h1v1h-1zM294 245h1v1h-1zM42 246h1v2h-1zM140 246h1v2h-1zM210 246h1v1h-1zM248 246h1v1h-1zM293 246h1v1h-1zM172 247h1v2h-1zM209 247h1v2h-1zM247 247h1v1h-1zM292 247h1v1h-1zM41 248h1v3h-1zM74 248h1v2h-1zM107 248h1v2h-1zM139 248h1v1h-1zM246 248h1v1h-1zM291 248h1v1h-1zM138 249h1v2h-1zM171 249h1v2h-1zM208 249h1v1h-1zM245 249h1v2h-1zM290 249h1v1h-1zM73 250h1v3h-1zM106 250h1v2h-1zM207 250h1v1h-1zM289 250h1v1h-1zM40 251h1v2h-1zM137 251h1v2h-1zM170 251h1v1h-1zM206 251h1v1h-1zM244 251h1v1h-1zM288 251h1v1h-1zM105 252h1v3h-1zM169 252h1v2h-1zM205 252h1v2h-1zM243 252h1v1h-1zM287 252h1v1h-1zM39 253h1v2h-1zM72 253h1v2h-1zM136 253h1v2h-1zM242 253h1v1h-1zM286 253h1v1h-1zM168 254h1v2h-1zM204 254h1v1h-1zM241 254h1v2h-1zM285 254h1v1h-1zM38 255h1v3h-1zM71 255h1v3h-1zM104 255h1v2h-1zM135 255h1v2h-1zM203 255h1v1h-1zM284 255h1v1h-1zM167 256h1v1h-1zM202 256h1v2h-1zM240 256h1v1h-1zM283 256h1v1h-1zM103 257h1v2h-1zM134 257h1v2h-1zM166 257h1v2h-1zM239 257h1v1h-1zM282 257h1v1h-1zM37 258h1v2h-1zM70 258h1v2h-1zM201 258h1v1h-1zM238 258h1v1h-1zM281 258h1v1h-1zM102 259h1v3h-1zM133 259h1v2h-1zM165 259h1v2h-1zM200 259h1v2h-1zM237 259h1v2h-1zM280 259h1v1h-1zM36 260h1v3h-1zM69 260h1v3h-1zM279 260h1v1h-1zM132 261h1v2h-1zM164 261h1v2h-1zM199 261h1v1h-1zM236 261h1v1h-1zM278 261h1v1h-1zM101 262h1v2h-1zM198 262h1v1h-1zM235 262h1v1h-1zM277 262h1v1h-1zM35 263h1v2h-1zM68 263h1v2h-1zM131 263h1v3h-1zM163 263h1v1h-1zM197 263h1v2h-1zM234 263h1v1h-1zM276 263h1v1h-1zM100 264h1v3h-1zM162 264h1v2h-1zM233 264h1v1h-1zM275 264h1v1h-1zM34 265h1v2h-1zM67 265h1v3h-1zM196 265h1v1h-1zM232 265h1v2h-1zM274 265h1v2h-1zM130 266h1v1h-1zM161 266h1v2h-1zM195 266h1v2h-1zM33 267h1v3h-1zM99 267h1v2h-1zM129 267h1v3h-1zM231 267h1v1h-1zM273 267h1v1h-1zM66 268h1v2h-1zM160 268h1v2h-1zM194 268h1v1h-1zM230 268h1v1h-1zM272 268h1v1h-1zM98 269h1v2h-1zM193 269h1v2h-1zM229 269h1v2h-1zM271 269h1v1h-1zM32 270h1v2h-1zM65 270h1v3h-1zM128 270h1v2h-1zM159 270h1v2h-1zM270 270h1v1h-1zM97 271h1v3h-1zM192 271h1v1h-1zM228 271h1v1h-1zM269 271h1v1h-1zM31 272h1v3h-1zM127 272h1v2h-1zM158 272h1v2h-1zM191 272h1v2h-1zM227 272h1v1h-1zM268 272h1v1h-1zM64 273h1v2h-1zM226 273h1v1h-1zM267 273h1v1h-1zM96 274h1v2h-1zM126 274h1v2h-1zM157 274h1v1h-1zM190 274h1v1h-1zM225 274h1v2h-1zM266 274h1v1h-1zM30 275h1v2h-1zM63 275h1v3h-1zM156 275h1v2h-1zM189 275h1v2h-1zM265 275h1v1h-1zM95 276h1v2h-1zM125 276h1v2h-1zM224 276h1v1h-1zM264 276h1v1h-1zM29 277h1v2h-1zM155 277h1v2h-1zM188 277h1v1h-1zM223 277h1v1h-1zM263 277h1v1h-1zM62 278h1v2h-1zM94 278h1v3h-1zM124 278h1v3h-1zM187 278h1v2h-1zM222 278h1v2h-1zM262 278h1v1h-1zM28 279h1v3h-1zM154 279h1v2h-1zM261 279h1v1h-1zM61 280h1v3h-1zM186 280h1v1h-1zM221 280h1v1h-1zM260 280h1v1h-1zM93 281h1v2h-1zM123 281h1v2h-1zM153 281h1v2h-1zM185 281h1v2h-1zM220 281h1v1h-1zM259 281h1v1h-1zM219 282h1v2h-1zM258 282h1v1h-1zM60 283h1v2h-1zM92 283h1v2h-1zM122 283h1v2h-1zM152 283h1v2h-1zM184 283h1v2h-1zM257 283h1v1h-1zM218 284h1v1h-1zM256 284h1v1h-1zM59 285h1v3h-1zM91 285h1v3h-1zM121 285h1v2h-1zM151 285h1v2h-1zM183 285h1v1h-1zM217 285h1v1h-1zM255 285h1v1h-1zM182 286h1v2h-1zM216 286h1v2h-1zM254 286h1v1h-1zM120 287h1v3h-1zM150 287h1v2h-1zM253 287h1v1h-1zM58 288h1v2h-1zM90 288h1v2h-1zM181 288h1v2h-1zM215 288h1v1h-1zM252 288h1v1h-1zM149 289h1v2h-1zM214 289h1v1h-1zM251 289h1v2h-1zM57 290h1v3h-1zM89 290h1v2h-1zM119 290h1v2h-1zM180 290h1v1h-1zM213 290h1v2h-1zM148 291h1v2h-1zM179 291h1v2h-1zM250 291h1v1h-1zM88 292h1v3h-1zM118 292h1v2h-1zM212 292h1v1h-1zM249 292h1v1h-1zM56 293h1v3h-1zM147 293h1v2h-1zM178 293h1v2h-1zM211 293h1v1h-1zM248 293h1v1h-1zM117 294h1v3h-1zM210 294h1v2h-1zM247 294h1v1h-1zM87 295h1v2h-1zM146 295h1v2h-1zM177 295h1v1h-1zM246 295h1v1h-1zM55 296h1v2h-1zM176 296h1v2h-1zM209 296h1v1h-1zM245 296h1v1h-1zM86 297h1v3h-1zM116 297h1v2h-1zM145 297h1v2h-1zM208 297h1v1h-1zM244 297h1v1h-1zM54 298h1v3h-1zM175 298h1v2h-1zM207 298h1v2h-1zM243 298h1v1h-1zM115 299h1v2h-1zM144 299h1v3h-1zM242 299h1v1h-1zM85 300h1v2h-1zM174 300h1v1h-1zM206 300h1v1h-1zM241 300h1v1h-1zM53 301h1v2h-1zM114 301h1v3h-1zM173 301h1v2h-1zM205 301h1v1h-1zM240 301h1v1h-1zM84 302h1v2h-1zM143 302h1v2h-1zM204 302h1v2h-1zM239 302h1v2h-1zM52 303h1v3h-1zM172 303h1v2h-1zM83 304h1v3h-1zM113 304h1v2h-1zM142 304h1v2h-1zM203 304h1v1h-1zM238 304h1v1h-1zM171 305h1v2h-1zM202 305h1v1h-1zM237 305h1v1h-1zM51 306h1v2h-1zM112 306h1v3h-1zM141 306h1v2h-1zM201 306h1v2h-1zM236 306h1v1h-1zM82 307h1v2h-1zM170 307h1v1h-1zM235 307h1v1h-1zM50 308h1v3h-1zM140 308h1v3h-1zM169 308h1v2h-1zM200 308h1v1h-1zM234 308h1v1h-1zM81 309h1v3h-1zM111 309h1v2h-1zM199 309h1v1h-1zM233 309h1v1h-1zM168 310h1v2h-1zM198 310h1v1h-1zM232 310h1v1h-1zM49 311h1v2h-1zM110 311h1v3h-1zM139 311h1v2h-1zM197 311h1v2h-1zM231 311h1v2h-1zM80 312h1v2h-1zM167 312h1v2h-1zM48 313h1v3h-1zM138 313h1v2h-1zM196 313h1v1h-1zM230 313h1v1h-1zM79 314h1v3h-1zM109 314h1v2h-1zM166 314h1v2h-1zM195 314h1v1h-1zM229 314h1v1h-1zM137 315h1v2h-1zM194 315h1v2h-1zM228 315h1v1h-1zM47 316h1v2h-1zM108 316h1v3h-1zM165 316h1v1h-1zM227 316h1v1h-1zM78 317h1v2h-1zM136 317h1v3h-1zM164 317h1v2h-1zM193 317h1v1h-1zM226 317h1v1h-1zM46 318h1v3h-1zM192 318h1v1h-1zM225 318h1v1h-1zM77 319h1v3h-1zM107 319h1v2h-1zM163 319h1v2h-1zM191 319h1v2h-1zM224 319h1v1h-1zM135 320h1v2h-1zM223 320h1v2h-1zM45 321h1v3h-1zM106 321h1v3h-1zM162 321h1v2h-1zM190 321h1v1h-1zM76 322h1v2h-1zM134 322h1v3h-1zM189 322h1v1h-1zM222 322h1v1h-1zM161 323h1v2h-1zM188 323h1v2h-1zM221 323h1v1h-1zM44 324h1v2h-1zM75 324h1v3h-1zM105 324h1v2h-1zM220 324h1v1h-1zM133 325h1v2h-1zM160 325h1v3h-1zM187 325h1v1h-1zM219 325h1v1h-1zM43 326h1v3h-1zM104 326h1v3h-1zM186 326h1v1h-1zM218 326h1v1h-1zM74 327h1v2h-1zM132 327h1v3h-1zM185 327h1v2h-1zM217 327h1v1h-1zM159 328h1v2h-1zM216 328h1v1h-1zM42 329h1v3h-1zM73 329h1v3h-1zM103 329h1v2h-1zM184 329h1v1h-1zM215 329h1v2h-1zM131 330h1v2h-1zM158 330h1v2h-1zM183 330h1v2h-1zM102 331h1v3h-1zM214 331h1v1h-1zM41 332h1v3h-1zM72 332h1v3h-1zM130 332h1v3h-1zM157 332h1v2h-1zM182 332h1v1h-1zM213 332h1v1h-1zM181 333h1v1h-1zM212 333h1v1h-1zM101 334h1v3h-1zM156 334h1v3h-1zM180 334h1v2h-1zM211 334h1v1h-1zM40 335h1v2h-1zM71 335h1v3h-1zM129 335h1v2h-1zM210 335h1v1h-1zM179 336h1v1h-1zM209 336h1v1h-1zM39 337h1v3h-1zM100 337h1v2h-1zM128 337h1v3h-1zM155 337h1v2h-1zM178 337h1v2h-1zM208 337h1v1h-1zM70 338h1v3h-1zM207 338h1v1h-1zM99 339h1v3h-1zM154 339h1v3h-1zM177 339h1v1h-1zM206 339h1v2h-1zM38 340h1v3h-1zM127 340h1v3h-1zM176 340h1v1h-1zM69 341h1v3h-1zM175 341h1v2h-1zM205 341h1v1h-1zM98 342h1v3h-1zM153 342h1v2h-1zM204 342h1v1h-1zM37 343h1v3h-1zM126 343h1v2h-1zM174 343h1v1h-1zM203 343h1v1h-1zM68 344h1v3h-1zM152 344h1v3h-1zM173 344h1v2h-1zM202 344h1v1h-1zM97 345h1v3h-1zM125 345h1v3h-1zM201 345h1v2h-1zM36 346h1v2h-1zM172 346h1v1h-1zM67 347h1v3h-1zM151 347h1v3h-1zM171 347h1v2h-1zM200 347h1v1h-1zM35 348h1v3h-1zM96 348h1v3h-1zM124 348h1v3h-1zM199 348h1v1h-1zM170 349h1v2h-1zM198 349h1v1h-1zM66 350h1v4h-1zM150 350h1v3h-1zM197 350h1v2h-1zM34 351h1v3h-1zM95 351h1v4h-1zM123 351h1v4h-1zM169 351h1v3h-1zM196 352h1v1h-1zM149 353h1v3h-1zM195 353h1v1h-1zM33 354h1v3h-1zM65 354h1v3h-1zM168 354h1v2h-1zM194 354h1v1h-1zM94 355h1v4h-1zM122 355h1v3h-1zM193 355h1v2h-1zM148 356h1v3h-1zM167 356h1v3h-1zM32 357h1v3h-1zM64 357h1v4h-1zM192 357h1v1h-1zM121 358h1v4h-1zM191 358h1v2h-1zM93 359h1v4h-1zM147 359h1v3h-1zM166 359h1v2h-1zM31 360h1v3h-1zM190 360h1v1h-1zM63 361h1v4h-1zM165 361h1v4h-1zM189 361h1v2h-1zM120 362h1v4h-1zM146 362h1v3h-1zM30 363h1v3h-1zM92 363h1v4h-1zM188 363h1v1h-1zM187 364h1v2h-1zM62 365h1v3h-1zM145 365h1v3h-1zM164 365h1v3h-1zM29 366h1v3h-1zM119 366h1v5h-1zM186 366h1v1h-1zM91 367h1v5h-1zM185 367h1v2h-1zM61 368h1v4h-1zM144 368h1v4h-1zM163 368h1v4h-1zM28 369h1v3h-1zM184 369h1v2h-1zM118 371h1v6h-1zM183 371h1v1h-1zM60 372h1v4h-1zM90 372h1v5h-1zM143 372h1v4h-1zM162 372h1v6h-1zM182 372h1v2h-1zM181 374h1v2h-1zM59 376h1v4h-1zM142 376h1v5h-1zM180 376h1v2h-1zM89 377h1v5h-1zM117 377h1v7h-1zM161 378h1v20h-1zM179 378h1v2h-1zM58 380h1v4h-1zM178 380h1v3h-1zM141 381h1v7h-1zM88 382h1v6h-1zM177 383h1v3h-1zM57 384h1v4h-1zM116 384h1v9h-1zM176 386h1v10h-1zM56 388h1v5h-1zM87 388h1v6h-1zM140 388h1v11h-1zM55 393h1v4h-1zM115 393h1v11h-1zM86 394h1v7h-1zM177 396h1v4h-1zM54 397h1v4h-1zM162 398h1v5h-1zM139 399h1v11h-1zM178 400h1v2h-1zM53 401h1v5h-1zM85 401h1v7h-1zM179 402h1v2h-1zM163 403h1v4h-1zM114 404h1v20h-1zM180 404h1v2h-1zM52 406h1v4h-1zM181 406h1v1h-1zM164 407h1v4h-1zM182 407h1v1h-1zM84 408h1v9h-1zM183 408h1v1h-1zM184 409h1v1h-1zM51 410h1v5h-1zM140 410h1v13h-1zM185 410h1v1h-1zM165 411h1v4h-1zM186 411h1v1h-1zM187 412h1v1h-1zM188 413h1v1h-1zM189 414h2v1h-2zM50 415h1v4h-1zM166 415h1v3h-1zM191 415h1v1h-1zM192 416h1v1h-1zM83 417h1v10h-1zM193 417h1v1h-1zM167 418h1v4h-1zM194 418h1v1h-1zM49 419h1v6h-1zM195 419h1v1h-1zM196 420h1v1h-1zM197 421h1v1h-1zM168 422h1v3h-1zM198 422h1v1h-1zM141 423h1v8h-1zM199 423h1v1h-1zM113 424h1v11h-1zM200 424h1v1h-1zM48 425h1v5h-1zM169 425h1v3h-1zM201 425h1v1h-1zM202 426h1v1h-1zM82 427h1v13h-1zM203 427h1v1h-1zM170 428h1v3h-1zM204 428h1v1h-1zM205 429h1v1h-1zM47 430h1v5h-1zM206 430h1v1h-1zM142 431h1v7h-1zM171 431h1v2h-1zM207 431h1v1h-1zM208 432h1v1h-1zM172 433h1v3h-1zM209 433h1v1h-1zM210 434h1v1h-1zM46 435h1v5h-1zM114 435h1v19h-1zM211 435h1v1h-1zM173 436h1v2h-1zM212 436h1v1h-1zM213 437h2v1h-2zM143 438h1v4h-1zM174 438h1v2h-1zM215 438h1v1h-1zM216 439h1v1h-1zM45 440h1v5h-1zM81 440h1v11h-1zM175 440h1v3h-1zM217 440h1v1h-1zM218 441h1v1h-1zM144 442h1v4h-1zM219 442h1v1h-1zM176 443h1v2h-1zM220 443h1v1h-1zM221 444h1v1h-1zM44 445h1v6h-1zM177 445h1v2h-1zM222 445h2v1h-2zM145 446h1v4h-1zM224 446h1v1h-1zM178 447h1v1h-1zM225 447h1v1h-1zM179 448h1v2h-1zM226 448h1v1h-1zM227 449h1v1h-1zM146 450h1v3h-1zM180 450h1v1h-1zM228 450h1v1h-1zM43 451h1v5h-1zM80 451h1v12h-1zM181 451h1v2h-1zM229 451h1v1h-1zM230 452h1v1h-1zM147 453h1v2h-1zM182 453h1v1h-1zM231 453h1v1h-1zM115 454h1v8h-1zM183 454h1v1h-1zM232 454h2v1h-2zM148 455h1v3h-1zM184 455h1v2h-1zM234 455h1v1h-1zM42 456h1v6h-1zM235 456h1v1h-1zM185 457h1v1h-1zM236 457h1v1h-1zM149 458h1v2h-1zM186 458h1v1h-1zM237 458h1v1h-1zM187 459h1v2h-1zM238 459h1v1h-1zM150 460h1v3h-1zM239 460h1v1h-1zM188 461h1v1h-1zM240 461h1v1h-1zM41 462h1v6h-1zM116 462h1v9h-1zM189 462h1v2h-1zM241 462h1v1h-1zM79 463h1v14h-1zM151 463h1v2h-1zM242 463h2v1h-2zM190 464h1v1h-1zM244 464h1v1h-1zM152 465h1v3h-1zM191 465h1v2h-1zM245 465h1v1h-1zM246 466h1v1h-1zM192 467h1v1h-1zM247 467h1v1h-1zM40 468h1v6h-1zM153 468h1v3h-1zM193 468h1v2h-1zM248 468h1v1h-1zM249 469h1v1h-1zM194 470h1v1h-1zM250 470h1v1h-1zM117 471h1v7h-1zM154 471h1v3h-1zM195 471h1v2h-1zM251 471h1v1h-1zM252 472h1v1h-1zM196 473h1v1h-1zM253 473h1v1h-1zM39 474h1v6h-1zM155 474h1v3h-1zM197 474h1v2h-1zM254 474h1v1h-1zM255 475h2v1h-2zM198 476h1v2h-1zM257 476h1v1h-1zM78 477h1v34h-1zM156 477h1v3h-1zM258 477h1v1h-1zM118 478h1v8h-1zM199 478h1v1h-1zM259 478h1v1h-1zM200 479h1v2h-1zM260 479h1v1h-1zM38 480h1v6h-1zM157 480h1v3h-1zM261 480h1v1h-1zM201 481h1v1h-1zM262 481h1v1h-1zM202 482h1v2h-1zM263 482h1v1h-1zM158 483h1v3h-1zM264 483h1v1h-1zM203 484h1v2h-1zM265 484h1v1h-1zM266 485h1v1h-1zM37 486h1v7h-1zM119 486h1v8h-1zM159 486h1v4h-1zM204 486h1v1h-1zM267 486h1v1h-1zM205 487h1v2h-1zM268 487h1v1h-1zM269 488h1v1h-1zM206 489h1v2h-1zM270 489h1v1h-1zM160 490h1v3h-1zM271 490h1v1h-1zM207 491h1v1h-1zM272 491h1v1h-1zM208 492h1v2h-1zM273 492h1v1h-1zM36 493h1v6h-1zM161 493h1v3h-1zM274 493h1v1h-1zM120 494h1v8h-1zM209 494h1v2h-1zM275 494h1v1h-1zM276 495h1v1h-1zM162 496h1v4h-1zM210 496h1v1h-1zM277 496h1v1h-1zM211 497h1v2h-1zM278 497h1v1h-1zM279 498h1v1h-1zM35 499h1v7h-1zM212 499h1v2h-1zM280 499h1v1h-1zM163 500h1v3h-1zM281 500h1v1h-1zM213 501h1v2h-1zM282 501h1v1h-1zM121 502h1v8h-1zM283 502h1v1h-1zM164 503h1v3h-1zM214 503h1v1h-1zM284 503h1v1h-1zM215 504h1v2h-1zM285 504h1v1h-1zM286 505h1v1h-1zM34 506h1v7h-1zM165 506h1v4h-1zM216 506h1v2h-1zM287 506h1v1h-1zM288 507h1v1h-1zM217 508h1v2h-1zM289 508h1v1h-1zM290 509h1v1h-1zM122 510h1v8h-1zM166 510h1v3h-1zM218 510h1v2h-1zM291 510h1v1h-1zM77 511h1v50h-1zM292 511h1v1h-1zM219 512h1v2h-1zM293 512h1v1h-1zM33 513h1v7h-1zM167 513h1v3h-1zM294 513h1v1h-1zM220 514h1v2h-1zM295 514h1v1h-1zM296 515h1v1h-1zM168 516h1v4h-1zM221 516h1v2h-1zM297 516h1v1h-1zM298 517h1v1h-1zM123 518h1v9h-1zM222 518h1v2h-1zM299 518h1v1h-1zM300 519h1v1h-1zM32 520h1v7h-1zM169 520h1v3h-1zM223 520h1v1h-1zM301 520h1v1h-1zM224 521h1v2h-1zM302 521h1v1h-1zM303 522h1v1h-1zM170 523h1v3h-1zM225 523h1v3h-1zM304 523h1v1h-1zM305 524h1v2h-1zM171 526h1v4h-1zM226 526h1v2h-1zM306 526h1v1h-1zM31 527h1v7h-1zM124 527h1v9h-1zM307 527h1v1h-1zM227 528h1v2h-1zM308 528h1v1h-1zM309 529h1v1h-1zM172 530h1v3h-1zM228 530h1v2h-1zM310 530h1v1h-1zM311 531h1v2h-1zM229 532h1v2h-1zM173 533h1v3h-1zM312 533h1v1h-1zM30 534h1v7h-1zM230 534h1v2h-1zM313 534h1v1h-1zM314 535h1v1h-1zM125 536h1v9h-1zM174 536h1v4h-1zM231 536h1v2h-1zM315 536h1v1h-1zM316 537h1v2h-1zM232 538h1v2h-1zM317 539h1v1h-1zM175 540h1v3h-1zM233 540h1v2h-1zM318 540h1v1h-1zM29 541h1v7h-1zM319 541h1v1h-1zM234 542h1v2h-1zM320 542h1v1h-1zM176 543h1v3h-1zM321 543h1v2h-1zM235 544h1v2h-1zM126 545h1v9h-1zM322 545h1v1h-1zM177 546h1v4h-1zM236 546h1v2h-1zM323 546h1v1h-1zM324 547h1v1h-1zM28 548h1v6h-1zM237 548h1v2h-1zM325 548h1v2h-1zM178 550h1v3h-1zM238 550h1v2h-1zM326 550h1v1h-1zM327 551h1v1h-1zM239 552h1v2h-1zM328 552h1v1h-1zM179 553h1v4h-1zM329 553h1v2h-1zM127 554h1v7h-1zM240 554h1v2h-1zM330 555h1v1h-1zM241 556h1v2h-1zM331 556h1v1h-1zM180 557h1v4h-1zM332 557h1v1h-1zM242 558h1v3h-1zM333 558h1v1h-1zM334 559h1v2h-1z" fill="#c41e6a"/>
<path d="M180 120h1v1h-1zM181 121h1v2h-1zM182 123h1v1h-1zM183 124h1v2h-1zM184 126h1v2h-1zM185 128h1v1h-1zM186 129h1v2h-1zM187 131h1v2h-1zM188 133h1v1h-1zM189 134h1v1h-1zM190 135h1v2h-1zM191 137h1v1h-1zM192 138h1v1h-1zM193 139h1v1h-1zM194 140h1v2h-1zM195 142h1v1h-1zM196 143h1v1h-1zM197 144h1v1h-1zM198 145h1v1h-1zM199 146h1v2h-1zM200 148h1v1h-1zM201 149h1v1h-1zM202 150h1v1h-1zM203 151h1v1h-1zM204 152h1v1h-1zM205 153h1v1h-1zM206 154h1v1h-1zM207 155h1v2h-1zM208 157h1v1h-1zM209 158h1v1h-1zM210 159h1v1h-1zM211 160h1v1h-1zM212 161h1v1h-1zM213 162h1v1h-1zM214 163h1v1h-1zM215 164h1v1h-1zM216 165h1v1h-1zM217 166h1v1h-1zM218 167h1v1h-1zM219 168h1v1h-1zM220 169h1v1h-1zM221 170h1v1h-1zM222 171h1v1h-1zM223 172h1v1h-1zM224 173h1v1h-1zM225 174h1v1h-1zM226 175h1v1h-1zM227 176h1v1h-1zM228 177h1v1h-1zM229 178h1v1h-1zM230 179h1v1h-1zM231 180h1v1h-1zM232 181h1v1h-1zM233 182h1v1h-1zM234 183h1v1h-1zM235 184h1v1h-1zM236 185h1v1h-1zM237 186h2v1h-2zM239 187h1v1h-1zM240 188h1v1h-1zM241 189h1v1h-1zM242 190h1v1h-1zM243 191h1v1h-1zM244 192h1v1h-1zM245 193h1v1h-1zM246 194h1v1h-1zM247 195h2v1h-2zM249 196h1v1h-1zM250 197h1v1h-1zM251 198h1v1h-1zM252 199h1v1h-1zM253 200h1v1h-1zM254 201h1v1h-1zM255 202h2v1h-2zM257 203h1v1h-1zM258 204h1v1h-1zM259 205h1v1h-1zM260 206h1v1h-1zM261 207h1v1h-1zM262 208h1v1h-1zM263 209h2v1h-2zM265 210h1v1h-1zM266 211h1v1h-1zM267 212h1v1h-1zM268 213h1v1h-1zM269 214h2v1h-2zM271 215h1v1h-1zM272 216h1v1h-1zM273 217h1v1h-1zM274 218h1v1h-1zM275 219h1v1h-1zM276 220h2v1h-2zM278 221h1v1h-1zM279 222h1v1h-1zM280 223h1v1h-1zM281 224h2v1h-2zM283 225h1v1h-1zM284 226h1v1h-1zM285 227h2v1h-2zM287 228h1v1h-1zM288 229h1v1h-1zM289 230h2v1h-2zM291 231h1v1h-1zM292 232h2v1h-2zM294 233h1v1h-1zM295 234h1v1h-1zM296 235h1v1h-1zM297 236h1v1h-1zM298 237h2v1h-2zM300 238h1v1h-1zM301 239h1v1h-1zM302 240h1v1h-1zM303 241h1v1h-1zM304 242h1v1h-1zM305 243h1v1h-1zM306 244h1v1h-1zM307 245h1v1h-1zM308 246h1v1h-1zM309 247h1v1h-1zM310 248h1v1h-1zM311 249h1v1h-1zM312 250h1v1h-1zM313 251h1v2h-1zM314 253h1v1h-1zM315 254h1v1h-1zM316 255h1v1h-1zM317 256h1v2h-1zM318 258h1v1h-1zM319 259h1v1h-1zM320 260h1v1h-1zM321 261h1v1h-1zM322 262h1v1h-1zM323 263h1v2h-1zM324 265h1v1h-1zM179 342h16v1h-16zM175 343h4v1h-4zM195 343h4v1h-4zM173 344h2v1h-2zM199 344h3v1h-3zM170 345h3v1h-3zM202 345h2v1h-2zM168 346h2v1h-2zM204 346h2v1h-2zM166 347h2v1h-2zM206 347h2v1h-2zM165 348h1v1h-1zM208 348h1v1h-1zM163 349h2v1h-2zM209 349h2v1h-2zM162 350h1v1h-1zM211 350h1v1h-1zM161 351h1v1h-1zM212 351h1v1h-1zM159 352h2v1h-2zM213 352h1v1h-1zM158 353h1v1h-1zM214 353h2v1h-2zM157 354h1v1h-1zM216 354h1v1h-1zM156 355h1v1h-1zM217 355h1v1h-1zM155 356h1v1h-1zM218 356h1v1h-1zM154 357h1v1h-1zM219 357h1v1h-1zM153 358h1v1h-1zM220 358h1v1h-1zM152 359h1v2h-1zM151 361h1v1h-1zM150 362h1v2h-1zM149 364h1v2h-1zM148 366h1v2h-1zM147 368h1v2h-1zM146 370h1v2h-1zM183 371h3v1h-3zM145 372h1v3h-1zM179 372h4v1h-4zM186 372h6v1h-6zM176 373h3v1h-3zM192 373h2v1h-2zM174 374h2v1h-2zM194 374h1v1h-1zM144 375h1v6h-1zM173 375h1v1h-1zM195 375h1v3h-1zM172 376h1v1h-1zM171 377h1v1h-1zM170 378h1v1h-1zM196 378h1v1h-1zM169 379h1v2h-1zM143 381h1v4h-1zM168 381h1v3h-1zM167 384h1v8h-1zM144 385h1v7h-1zM145 392h1v3h-1zM168 392h1v2h-1zM169 394h1v2h-1zM146 395h1v3h-1zM196 395h1v1h-1zM170 396h1v1h-1zM195 396h1v1h-1zM171 397h1v1h-1zM194 397h1v1h-1zM147 398h1v2h-1zM172 398h1v1h-1zM193 398h1v1h-1zM206 398h1v3h-1zM173 399h1v1h-1zM191 399h2v1h-2zM148 400h1v2h-1zM174 400h1v1h-1zM190 400h1v1h-1zM175 401h2v1h-2zM187 401h3v1h-3zM205 401h1v1h-1zM149 402h1v2h-1zM177 402h3v1h-3zM184 402h3v1h-3zM204 402h1v1h-1zM180 403h4v1h-4zM203 403h1v1h-1zM150 404h1v1h-1zM202 404h1v1h-1zM151 405h1v1h-1zM201 405h1v1h-1zM152 406h1v1h-1zM200 406h1v1h-1zM153 407h1v1h-1zM199 407h1v1h-1zM154 408h1v1h-1zM198 408h1v1h-1zM155 409h1v1h-1zM197 409h1v1h-1zM156 410h2v1h-2zM195 410h2v1h-2zM158 411h1v1h-1zM193 411h2v1h-2zM238 411h1v2h-1zM159 412h3v1h-3zM192 412h1v1h-1zM162 413h2v1h-2zM189 413h3v1h-3zM237 413h1v4h-1zM164 414h3v1h-3zM187 414h2v1h-2zM167 415h5v1h-5zM182 415h5v1h-5zM172 416h10v1h-10zM236 417h1v3h-1zM235 420h1v2h-1zM234 422h1v1h-1zM233 423h1v2h-1zM232 425h1v2h-1zM231 427h1v1h-1zM230 428h1v1h-1zM229 429h1v1h-1zM228 430h1v1h-1zM227 431h1v1h-1zM226 432h1v1h-1zM28 433h1v1h-1zM225 433h1v1h-1zM29 434h1v1h-1zM224 434h1v1h-1zM30 435h2v1h-2zM223 435h1v1h-1zM32 436h2v1h-2zM222 436h1v1h-1zM34 437h2v1h-2zM221 437h1v1h-1zM36 438h2v1h-2zM220 438h1v1h-1zM38 439h2v1h-2zM219 439h1v1h-1zM40 440h2v1h-2zM218 440h1v1h-1zM42 441h2v1h-2zM217 441h1v1h-1zM44 442h2v1h-2zM216 442h1v1h-1zM46 443h2v1h-2zM215 443h1v1h-1zM48 444h2v1h-2zM213 444h2v1h-2zM50 445h2v1h-2zM212 445h1v1h-1zM52 446h2v1h-2zM211 446h1v1h-1zM54 447h3v1h-3zM209 447h2v1h-2zM57 448h2v1h-2zM208 448h1v1h-1zM59 449h2v1h-2zM206 449h2v1h-2zM61 450h2v1h-2zM205 450h1v1h-1zM63 451h3v1h-3zM203 451h2v1h-2zM66 452h2v1h-2zM202 452h1v1h-1zM68 453h3v1h-3zM201 453h1v1h-1zM71 454h3v1h-3zM199 454h2v1h-2zM74 455h2v1h-2zM198 455h1v1h-1zM76 456h3v1h-3zM196 456h2v1h-2zM79 457h3v1h-3zM195 457h1v1h-1zM82 458h3v1h-3zM193 458h2v1h-2zM85 459h4v1h-4zM191 459h2v1h-2zM89 460h3v1h-3zM190 460h1v1h-1zM92 461h4v1h-4zM187 461h3v1h-3zM96 462h3v1h-3zM184 462h3v1h-3zM99 463h4v1h-4zM180 463h4v1h-4zM103 464h3v1h-3zM175 464h5v1h-5zM106 465h4v1h-4zM171 465h4v1h-4zM110 466h4v1h-4zM166 466h5v1h-5zM114 467h5v1h-5zM161 467h5v1h-5zM119 468h4v1h-4zM155 468h6v1h-6zM123 469h6v1h-6zM147 469h8v1h-8zM129 470h18v1h-18z" fill="#148228"/>
<path d="M28,120.5H344 M28,560.5H344 M28.5,120V561 M343.5,120V561" fill="none" stroke="#a6a6a6" stroke-width="1" stroke-dasharray="1 1"/>
</g>

<g font-family="Liberation Sans, sans-serif" font-size="14.2px">
<g fill="#c2185e">
<text x="40.7" y="181.7">28</text>
<text x="65.7" y="200.2">25</text>
<text x="76" y="253.7">22</text>
<text x="123.9" y="218">19</text>
<text x="205.2" y="120" textLength="15" lengthAdjust="spacingAndGlyphs">16</text>
<text x="141.7" y="313.9">12</text>
<text x="172" y="533.5" textLength="26.6" lengthAdjust="spacingAndGlyphs">9.4c</text>
<text x="208.7" y="297.2" textLength="25.6" lengthAdjust="spacingAndGlyphs">6.2c</text>
<text x="233.7" y="455" textLength="25.8" lengthAdjust="spacingAndGlyphs">3.1c</text>
</g>
<g fill="#168a28">
<text x="254.5" y="200.3" textLength="30.8" lengthAdjust="spacingAndGlyphs">4.3m</text>
<text x="138.5" y="470.4" textLength="30.4" lengthAdjust="spacingAndGlyphs">4.3m</text>
<text x="165" y="345.7" textLength="28.8" lengthAdjust="spacingAndGlyphs">7.1m</text>
<text x="177" y="386">1.2</text>
</g>
</g>

<polygon points="463.6,144.9 579.3,546.3 183.3,390.1" fill="#979797"/>
</svg>
<div id="win2" class="abs" style="left:1px;top:1px;width:780px;height:670px;">
  <!-- monitor dialog -->
  <div id="dlg" class="abs" style="left:502px;top:44px;width:262px;height:202px;box-sizing:border-box;border:1px solid #8f8f8e;border-radius:8px 8px 0 0;background:#e8e8e7;box-shadow:0 4px 21px 0 rgba(0,0,0,0.42);overflow:hidden;">
    <div class="abs" style="left:0;top:0;width:260px;height:36px;background:linear-gradient(#f8f8f7,#f0f0ef);border-bottom:1px solid #a9a9a8;"></div>
  </div>
  <div class="t" style="left:606.5px;top:54.5px;-webkit-text-stroke:0.5px #2e3436;transform:scaleX(0.990);">Monitor</div>
  <div class="cb" style="top:110px;"></div>
  <div class="cb" style="top:140px;"></div>
  <div class="cb" style="top:170px;"></div>
  <div class="cb" style="top:200px;"></div>
  <div class="abs" style="left:640.5px;top:109px;width:60.5px;height:16px;background:#b4b4b4;"></div>
  <div class="abs" style="left:649px;top:167px;width:49px;height:18px;background:#b4b4b4;"></div>
  <div class="abs" style="left:540px;top:168px;width:71px;height:19px;box-sizing:border-box;border:1px dotted #8a8a8a;"></div>
  <div class="t" style="left:540px;top:109.7px;transform:scaleX(0.953);">Voltage :</div>
  <div class="t" style="left:621px;top:109.7px;transform:scaleX(0.934);">0.09371526</div>
  <div class="t" style="left:540px;top:139.7px;transform:scaleX(0.953);">Flow</div>
  <div class="t" style="left:587.5px;top:139.7px;transform:scaleX(0.953);">:</div>
  <div class="t" style="left:621px;top:139.7px;transform:scaleX(0.934);">1.66913368</div>
  <div class="t" style="left:541.4px;top:169.7px;transform:scaleX(0.972);">|Current|</div>
  <div class="t" style="left:604.5px;top:169.7px;transform:scaleX(0.953);">:</div>
  <div class="t" style="left:621px;top:169.7px;transform:scaleX(0.934);">0.00433468</div>
  <div class="t" style="left:541px;top:199.7px;transform:scaleX(0.924);">∠Current :</div>
  <div class="t" style="left:621px;top:199.7px;transform:scaleX(0.930);">-33.7343°</div>
</div>
<svg class="abs" style="left:0;top:0;" width="782" height="672" viewBox="0 0 782 672">
<!-- window controls -->
<g stroke="#858585" fill="none">
<path d="M691,22H699" stroke-width="2"/>
<rect x="726" y="16" width="6" height="6" stroke-width="2"/>
<path d="M759.3,15.6L766.5,22.8M766.5,15.6L759.3,22.8" stroke-width="1.6"/>
</g>
<!-- dialog close -->
<path d="M742.6,60.6L749.4,67.4M749.4,60.6L742.6,67.4" stroke="#2e3436" stroke-width="2.1" fill="none"/>
<!-- new doc -->
<path d="M43.6,79.6H50.6L53.7,82.7V91.6H43.6Z" fill="#fff" stroke="#000" stroke-width="1.2" stroke-linejoin="miter"/>
<path d="M50.4,79.6V82.9H53.7" fill="none" stroke="#000" stroke-width="1.1"/>
<!-- open folder -->
<path d="M80.5,91.4V82.8H83.6L84.4,83.7H90.6V86.3" fill="#ecec78" stroke="#000" stroke-width="1.1"/>
<path d="M80.5,86.5 L82.5,83.5 90.5,84 90.5,86.5Z" fill="#f4f48c"/>
<path d="M84.6,86.5H96L91,91.5H80.5Z" fill="#8c8c22" stroke="#000" stroke-width="1.1" stroke-linejoin="miter"/>
<path d="M88.2,79.8Q90.6,77 93.6,80.6" fill="none" stroke="#000" stroke-width="1.1"/>
<path d="M95.1,78.9V81.8H92.3Z" fill="#000"/>
<!-- gear -->
<g transform="translate(129.9,85.9)">
<path d="M-1.3,-7.6L1.3,-7.6L2.2,-5.5L4.5,-6.3L6.3,-4.5L5.5,-2.2L7.6,-1.3L7.6,1.3L5.5,2.2L6.3,4.5L4.5,6.3L2.2,5.5L1.3,7.6L-1.3,7.6L-2.2,5.5L-4.5,6.3L-6.3,4.5L-5.5,2.2L-7.6,1.3L-7.6,-1.3L-5.5,-2.2L-6.3,-4.5L-4.5,-6.3L-2.2,-5.5Z" fill="#e4edf6" stroke="#5b6e82" stroke-width="1" stroke-linejoin="round"/>
<circle r="3.2" fill="#dfe7ef" stroke="#5b6e82" stroke-width="1"/>
</g>
<!-- scissors -->
<path d="M171.4,85.6L171.9,79.6" stroke="#5f6d7a" stroke-width="1.3" fill="none"/>
<path d="M172.6,84.6L173.3,80.6" stroke="#f3f3f3" stroke-width="1.4" fill="none"/>
<path d="M173.4,86.6L180.4,84.9" stroke="#55606a" stroke-width="1" fill="none"/>
<path d="M173.3,85.4L180.2,83.7" stroke="#f5f5f5" stroke-width="1.3" fill="none"/>
<circle cx="166.8" cy="86.8" r="2.2" fill="#bfe0ff" stroke="#3767a0" stroke-width="1.7"/>
<circle cx="171.6" cy="90.6" r="2.3" fill="#bfe0ff" stroke="#3767a0" stroke-width="1.7"/>
<path d="M168.6,88.2L172.6,86" stroke="#3767a0" stroke-width="1.6" fill="none"/>
<!-- play -->
<circle cx="212.1" cy="85.75" r="8.6" fill="#cfe8fb"/>
<circle cx="212.1" cy="85.75" r="7.3" fill="#4fb0ec" stroke="#1f63a8" stroke-width="1.1"/>
<path d="M209.5,81.2V90.8L215.7,86Z" fill="#fff" stroke="#1f5e9e" stroke-width="0.9" stroke-linejoin="round"/>
<!-- chart -->
<rect x="248.2" y="78.2" width="15.4" height="15.3" fill="#fff"/>
<path d="M249,79H251.8V90H263.2V92.7H249Z" fill="#000"/>
<path d="M252.6,88.6L256.5,83.6L259,84.3L260.4,85.3L262.5,80.3" fill="none" stroke="#c23322" stroke-width="1.4" stroke-linejoin="round"/>
<!-- magnifier -->
<circle cx="298" cy="83" r="4.5" fill="#fff" stroke="#000" stroke-width="1.3"/>
<path d="M301.5,86.5L307,92" stroke="#000" stroke-width="2.4" fill="none"/>
<!-- scroll arrows -->
<g stroke="#2e3436" stroke-width="1.6" fill="none">
<path d="M12,636L8,639.8L12,643.6"/>
<path d="M755.5,636L759.5,639.6L755.5,643.2"/>
<path d="M769.8,119.5L773.5,115.8L777.2,119.5"/>
<path d="M769.8,621.6L773.5,625.4L777.2,621.6"/>
</g>
<!-- check marks -->
<g fill="#2e3436">
<polygon points="521.9,118.4 524.1,116.5 527.3,120.0 534.1,112.0 534.7,115.8 527.7,123.8"/>
<polygon points="521.9,148.4 524.1,146.5 527.3,150.0 534.1,142.0 534.7,145.8 527.7,153.8"/>
<polygon points="521.9,178.4 524.1,176.5 527.3,180.0 534.1,172.0 534.7,175.8 527.7,183.8"/>
<polygon points="521.9,208.4 524.1,206.5 527.3,210.0 534.1,202.0 534.7,205.8 527.7,213.8"/>
</g>
<!-- hand cursor -->
<path d="M244.9,193.7Q246.2,192.3 247.6,193.7L247.9,198.7Q249.5,197.9 250.8,199.3Q252.4,199 253.4,200.4Q255.4,200.4 256.4,202.3L257,207.4Q257,213.3 254.1,215.3Q250,217.6 246.2,214.9L240,208.3Q238.7,206.6 240.4,205.8Q242.5,205.3 244.6,207.9Z" fill="#fff" stroke="#2e3436" stroke-width="1.2" stroke-linejoin="round"/>
<path d="M250.8,199.3V203.3M253.4,200.4V203.7" stroke="#2e3436" stroke-width="1" fill="none"/>
</svg>

</body></html>
